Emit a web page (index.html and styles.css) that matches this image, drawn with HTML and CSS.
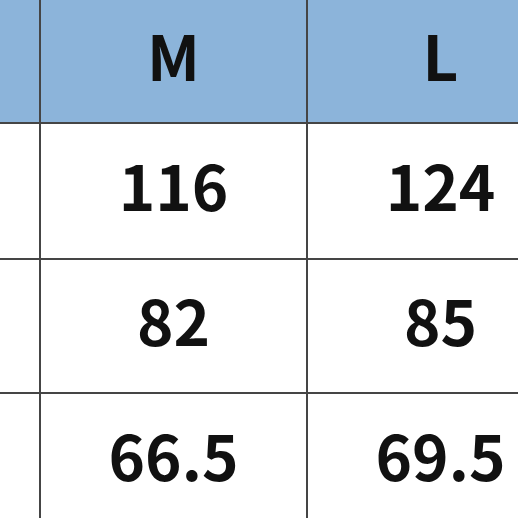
FILE: index.html
```html
<!DOCTYPE html>
<html lang="ko">
<head>
<meta charset="utf-8">
<link rel="stylesheet" href="styles.css">
</head>
<body>
<div class="table">
  <div class="cell head"></div>
  <div class="cell head">M</div>
  <div class="cell head">L</div>
  <div class="cell"></div>
  <div class="cell">116</div>
  <div class="cell">124</div>
  <div class="cell"></div>
  <div class="cell">82</div>
  <div class="cell">85</div>
  <div class="cell"></div>
  <div class="cell">66.5</div>
  <div class="cell">69.5</div>
</div>
</body>
</html>
```

FILE: styles.css
```css
html, body {
  margin: 0;
  padding: 0;
  background: #ffffff;
  overflow: hidden;
  width: 518px;
  height: 518px;
}
.table {
  display: grid;
  grid-template-columns: 39px 265px 265px;
  grid-template-rows: 122px 134px 132px 134px;
  gap: 2px;
  background: #454545;
  width: 573px;
  font-family: "Noto Sans CJK KR", "Noto Sans", sans-serif;
  font-weight: 700;
  font-size: 62px;
  color: #111;
}
.cell {
  background: #ffffff;
  display: flex;
  align-items: center;
  justify-content: center;
  line-height: 1;
  padding-bottom: 14px;
  box-sizing: border-box;
}
.head {
  background: #8cb4da;
}
```
